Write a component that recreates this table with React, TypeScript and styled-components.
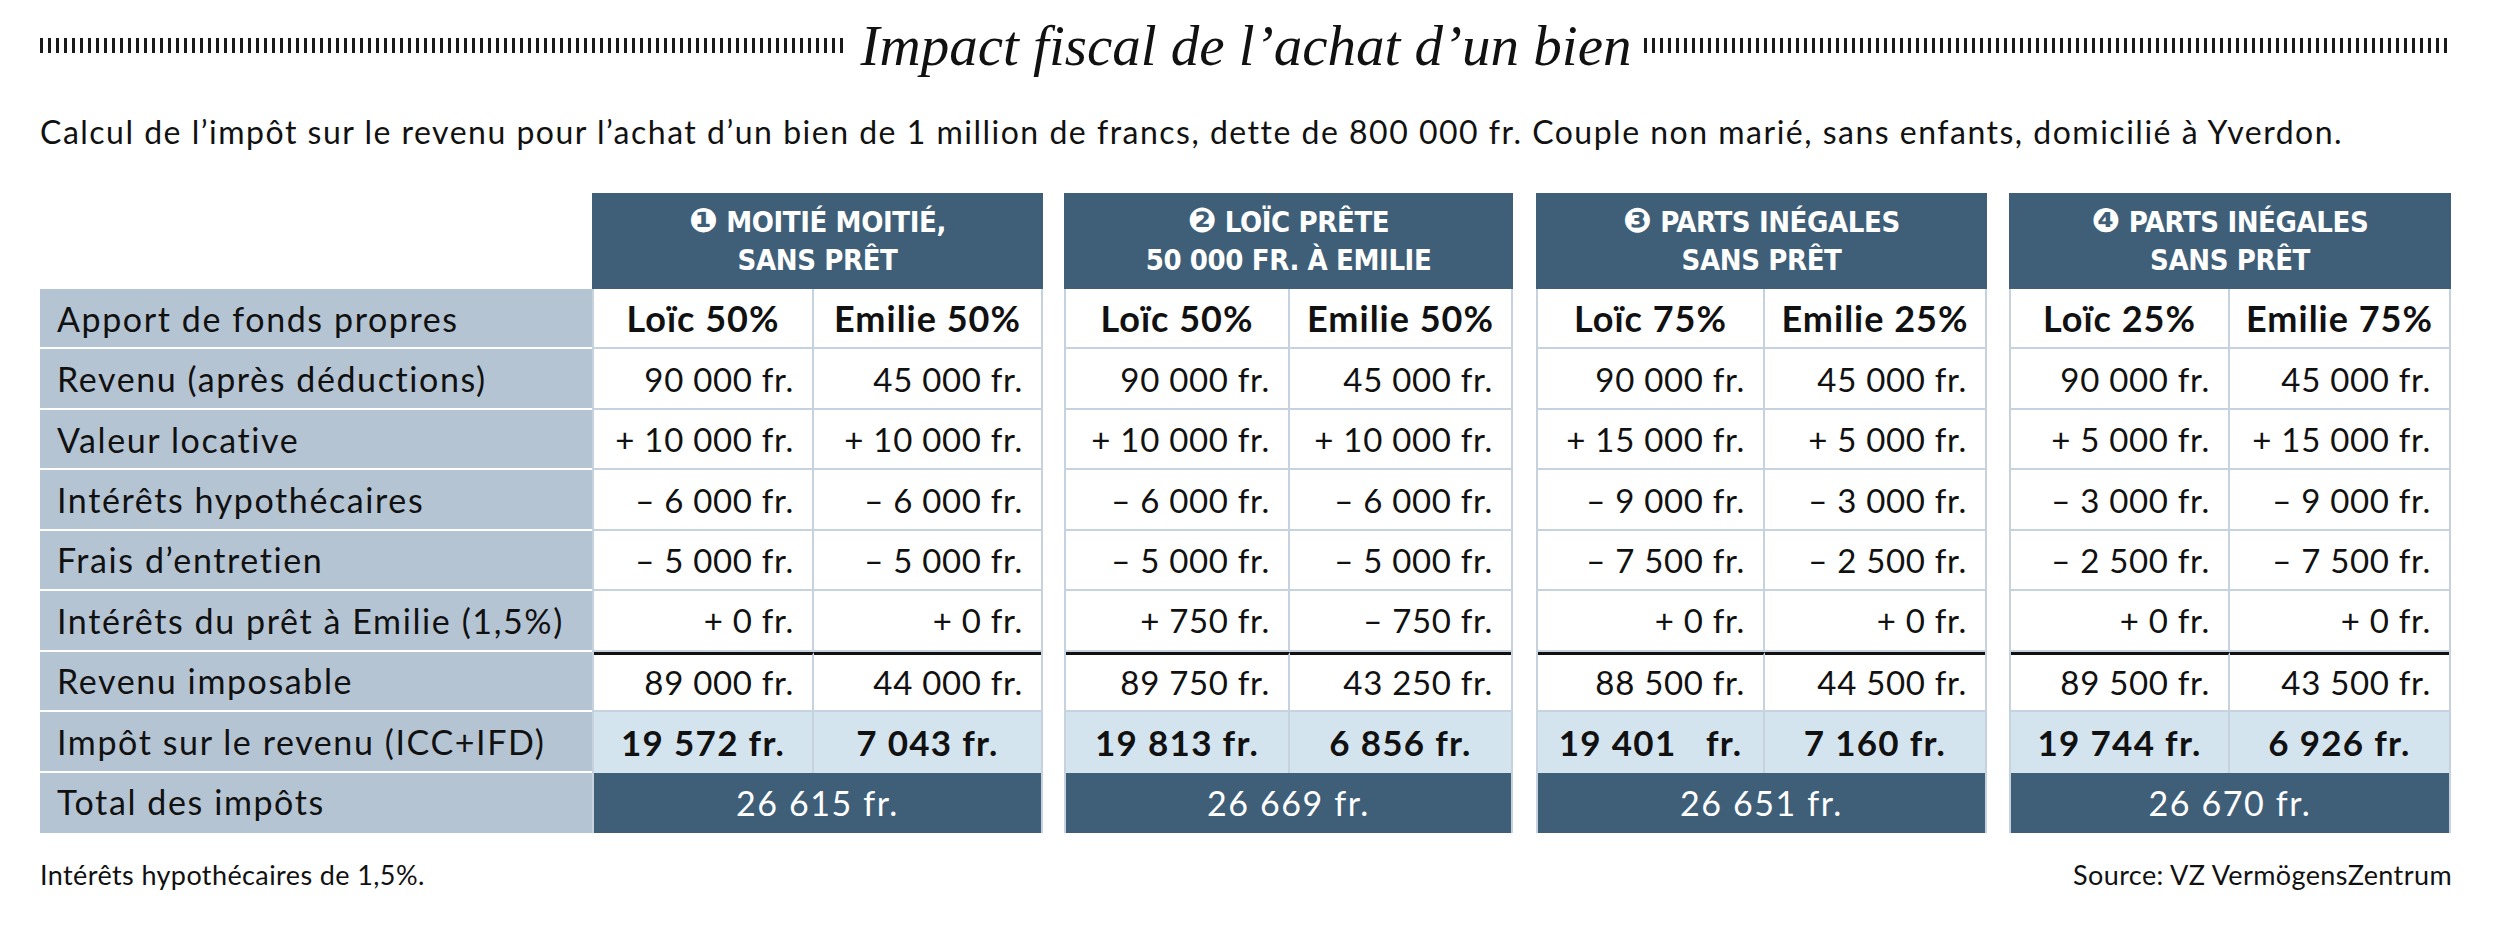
import React from "react";
import styled, { createGlobalStyle } from "styled-components";

const dark = "#3f5f79"
const labelBg = "#b5c4d3"
const taxBg = "#d4e4ee"
const line = "#c6d3df"
const ink = "#111"
const sans = `"Lato", "Open Sans", sans-serif`
const narrow = `"Liberation Sans Narrow", "DejaVu Sans Condensed", "Lato", sans-serif`

const labels = [
  "Apport de fonds propres",
  "Revenu (après déductions)",
  "Valeur locative",
  "Intérêts hypothécaires",
  "Frais d’entretien",
  "Intérêts du prêt à Emilie (1,5%)",
  "Revenu imposable",
  "Impôt sur le revenu (ICC+IFD)",
  "Total des impôts",
]

type Scenario = {
  num: string
  title: string[]
  width: number
  split: number
  gap: number
  heads: [string, string]
  rows: [string, string][]
  tax: [string, string]
  total: string
}

const scenarios: Scenario[] = [
  {
    num: "❶", title: ["MOITIÉ MOITIÉ,", "SANS PRÊT"], width: 451, split: 220, gap: 0,
    heads: ["Loïc 50%", "Emilie 50%"],
    rows: [
      ["90 000 fr.", "45 000 fr."],
      ["+ 10 000 fr.", "+ 10 000 fr."],
      ["– 6 000 fr.", "– 6 000 fr."],
      ["– 5 000 fr.", "– 5 000 fr."],
      ["+ 0 fr.", "+ 0 fr."],
      ["89 000 fr.", "44 000 fr."],
    ],
    tax: ["19 572 fr.", "7 043 fr."],
    total: "26 615 fr.",
  },
  {
    num: "❷", title: ["LOÏC PRÊTE", "50 000 FR. À EMILIE"], width: 449, split: 224, gap: 21,
    heads: ["Loïc 50%", "Emilie 50%"],
    rows: [
      ["90 000 fr.", "45 000 fr."],
      ["+ 10 000 fr.", "+ 10 000 fr."],
      ["– 6 000 fr.", "– 6 000 fr."],
      ["– 5 000 fr.", "– 5 000 fr."],
      ["+ 750 fr.", "– 750 fr."],
      ["89 750 fr.", "43 250 fr."],
    ],
    tax: ["19 813 fr.", "6 856 fr."],
    total: "26 669 fr.",
  },
  {
    num: "❸", title: ["PARTS INÉGALES", "SANS PRÊT"], width: 451, split: 227, gap: 23,
    heads: ["Loïc 75%", "Emilie 25%"],
    rows: [
      ["90 000 fr.", "45 000 fr."],
      ["+ 15 000 fr.", "+ 5 000 fr."],
      ["– 9 000 fr.", "– 3 000 fr."],
      ["– 7 500 fr.", "– 2 500 fr."],
      ["+ 0 fr.", "+ 0 fr."],
      ["88 500 fr.", "44 500 fr."],
    ],
    tax: ["19 401\u00a0\u00a0 fr.", "7 160 fr."],
    total: "26 651 fr.",
  },
  {
    num: "❹", title: ["PARTS INÉGALES", "SANS PRÊT"], width: 442, split: 219, gap: 22,
    heads: ["Loïc 25%", "Emilie 75%"],
    rows: [
      ["90 000 fr.", "45 000 fr."],
      ["+ 5 000 fr.", "+ 15 000 fr."],
      ["– 3 000 fr.", "– 9 000 fr."],
      ["– 2 500 fr.", "– 7 500 fr."],
      ["+ 0 fr.", "+ 0 fr."],
      ["89 500 fr.", "43 500 fr."],
    ],
    tax: ["19 744 fr.", "6 926 fr."],
    total: "26 670 fr.",
  },
]

const App = () => {
  return (
    <Page>
      <GlobalStyle />
      <TitleBar>
        <Dashes />
        <Title>Impact fiscal de l’achat d’un bien</Title>
        <Dashes />
      </TitleBar>
      <Intro>
        Calcul de l’impôt sur le revenu pour l’achat d’un bien de 1 million de francs, dette de 800 000 fr. Couple non marié, sans enfants, domicilié à Yverdon.
      </Intro>
      <Table>
        <LabelColumn>
          {labels.map(l => <LabelCell key={l}>{l}</LabelCell>)}
        </LabelColumn>
        {scenarios.map(s => (
          <Group key={s.num} $w={s.width} $gap={s.gap}>
            <GroupHeader>
              <span><Num>{s.num}</Num> {s.title[0]}</span>
              <span>{s.title[1]}</span>
            </GroupHeader>
            <GroupBody $split={s.split}>
              <Cell $kind="head">{s.heads[0]}</Cell>
              <Cell $kind="head" $last>{s.heads[1]}</Cell>
              {s.rows.map((r, i) => (
                <React.Fragment key={i}>
                  <Cell $kind="value" $rule={i === 5}>{r[0]}</Cell>
                  <Cell $kind="value" $rule={i === 5} $last>{r[1]}</Cell>
                </React.Fragment>
              ))}
              <Cell $kind="tax">{s.tax[0]}</Cell>
              <Cell $kind="tax" $last>{s.tax[1]}</Cell>
              <Total>{s.total}</Total>
            </GroupBody>
          </Group>
        ))}
      </Table>
      <Footer>
        <span>Intérêts hypothécaires de 1,5%.</span>
        <span>Source: VZ VermögensZentrum</span>
      </Footer>
    </Page>
  )
}

const GlobalStyle = createGlobalStyle`
  body { margin: 0; background: #fff; }
`

const Page = styled.div`
  width: 2500px;
  box-sizing: border-box;
  padding: 0 48px 0 40px;
  font-family: ${sans};
  color: ${ink};
`

const TitleBar = styled.div`
  display: flex;
  align-items: center;
  gap: 13px;
  height: 90px;
`

const Dashes = styled.div`
  flex: 1;
  height: 15px;
  background: repeating-linear-gradient(to right, #1a1a1a 0 3px, transparent 3px 8px);
`

const Title = styled.h1`
  margin: 0;
  font-family: "Liberation Serif", serif;
  font-style: italic;
  font-weight: 400;
  font-size: 57px;
  line-height: 1;
  white-space: nowrap;
`

const Intro = styled.p`
  margin: 22px 0 0;
  font-size: 32px;
  line-height: 40px;
  white-space: nowrap;
  letter-spacing: 1.5px;
`

const Table = styled.div`
  display: flex;
  align-items: flex-start;
  margin-top: 41px;
`

const LabelColumn = styled.div`
  width: 552px;
  padding-top: 96px;
`

const rowH = "60.44px"

const LabelCell = styled.div`
  height: ${rowH};
  box-sizing: border-box;
  display: flex;
  align-items: center;
  padding-left: 17px;
  background: ${labelBg};
  border-bottom: 2px solid #fff;
  font-size: 34px;
  letter-spacing: 1.6px;
  white-space: nowrap;
  &:last-child { border-bottom-color: ${labelBg}; }
`

const Group = styled.div<{ $w: number; $gap: number }>`
  width: ${p => p.$w}px;
  margin-left: ${p => p.$gap}px;
`

const GroupHeader = styled.div`
  height: 96px;
  background: ${dark};
  color: #fff;
  display: flex;
  flex-direction: column;
  align-items: center;
  justify-content: center;
  font-family: ${narrow};
  font-weight: 700;
  font-size: 29px;
  line-height: 38px;
  letter-spacing: -0.4px;
  white-space: nowrap;
`

const Num = styled.span`
  font-family: "DejaVu Sans", sans-serif;
  font-size: 34px;
  line-height: 0;
`

const GroupBody = styled.div<{ $split: number }>`
  display: grid;
  grid-template-columns: ${p => p.$split}px 1fr;
  grid-auto-rows: ${rowH};
  border-left: 2px solid ${line};
  border-right: 2px solid ${line};
  box-sizing: border-box;
`

type CellKind = "head" | "value" | "tax"

const sizes: Record<CellKind, string> = { head: "36px", value: "33px", tax: "35px" }
const spacing: Record<CellKind, string> = { head: "1px", value: "0.7px", tax: "1.3px" }

const Cell = styled.div<{ $kind: CellKind; $rule?: boolean; $last?: boolean }>`
  box-sizing: border-box;
  display: flex;
  align-items: center;
  justify-content: ${p => (p.$kind === "value" ? "flex-end" : "center")};
  padding-right: ${p => (p.$kind === "value" ? "18px" : "0")};
  background: ${p => (p.$kind === "tax" ? taxBg : "#fff")};
  border-right: ${p => (p.$last ? "none" : `2px solid ${line}`)};
  border-bottom: ${p => (p.$kind === "tax" ? "none" : `2px solid ${line}`)};
  border-top: ${p => (p.$rule ? `3px solid ${ink}` : "none")};
  font-size: ${p => sizes[p.$kind]};
  font-weight: ${p => (p.$kind === "value" ? 400 : 700)};
  letter-spacing: ${p => spacing[p.$kind]};
  white-space: pre;
`

const Total = styled.div`
  grid-column: 1 / -1;
  background: ${dark};
  color: #fff;
  display: flex;
  align-items: center;
  justify-content: center;
  font-size: 34px;
  letter-spacing: 1.6px;
`

const Footer = styled.div`
  display: flex;
  justify-content: space-between;
  margin-top: 24px;
  font-size: 27px;
  line-height: 36px;
  letter-spacing: 0.4px;
`

export default App
